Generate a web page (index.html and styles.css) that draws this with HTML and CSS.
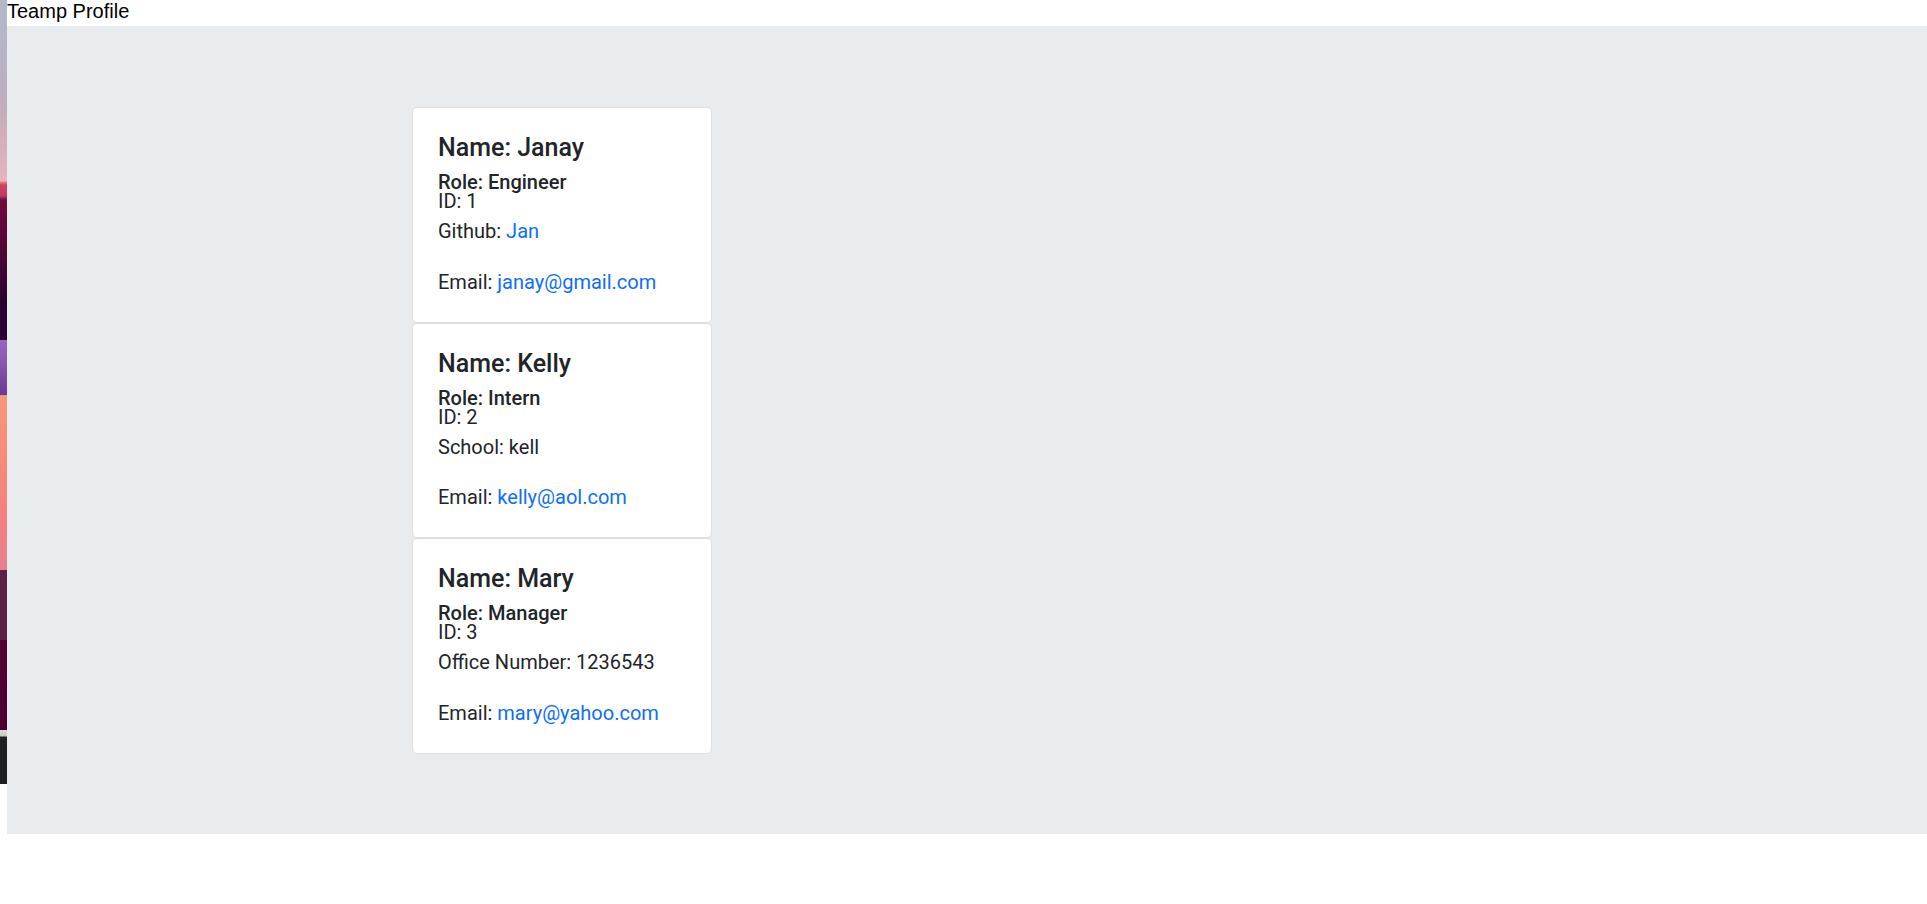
FILE: index.html
```html
<!DOCTYPE html>
<html lang="en">
<head>
<meta charset="utf-8">
<title>Teamp Profile</title>
<link rel="stylesheet" href="styles.css">
</head>
<body>
<div class="screen">
  <div class="wallpaper"></div>
  <div class="page">
    <div class="site-title">Teamp Profile</div>
    <main class="jumbotron">
      <div class="team-list">
        <section class="card">
          <h5 class="card-title">Name: Janay</h5>
          <h6 class="card-subtitle">Role: Engineer</h6>
          <p class="card-id">ID: 1</p>
          <p class="card-text">Github: <a href="#">Jan</a></p>
          <p class="card-email">Email: <a href="#">janay@gmail.com</a></p>
        </section>
        <section class="card">
          <h5 class="card-title">Name: Kelly</h5>
          <h6 class="card-subtitle">Role: Intern</h6>
          <p class="card-id">ID: 2</p>
          <p class="card-text">School: kell</p>
          <p class="card-email">Email: <a href="#">kelly@aol.com</a></p>
        </section>
        <section class="card">
          <h5 class="card-title">Name: Mary</h5>
          <h6 class="card-subtitle">Role: Manager</h6>
          <p class="card-id">ID: 3</p>
          <p class="card-text">Office Number: 1236543</p>
          <p class="card-email">Email: <a href="#">mary@yahoo.com</a></p>
        </section>
      </div>
    </main>
  </div>
</div>
</body>
</html>
```

FILE: styles.css
```css
* { box-sizing: border-box; }

html, body {
  margin: 0;
  padding: 0;
  background: #ffffff;
}

.screen {
  display: flex;
  align-items: flex-start;
  width: 1927px;
  height: 904px;
  overflow: hidden;
}

.wallpaper {
  flex: 0 0 7px;
  height: 784px;
  background: linear-gradient(to bottom,
    #b2b8c8 0px,
    #b6b4c6 60px,
    #c4acbc 110px,
    #dcb2bc 160px,
    #e6b6bc 181px,
    #f08070 182px,
    #cc4466 185px,
    #c03860 196px,
    #700840 200px,
    #5a0538 240px,
    #3c0434 275px,
    #2a0030 300px,
    #2a0032 340px,
    #9a66c0 340px,
    #8a5ab0 360px,
    #6c3a90 395px,
    #f8967a 395px,
    #f88c78 450px,
    #f28080 520px,
    #e6808e 570px,
    #5c1e44 570px,
    #5e2048 640px,
    #520032 640px,
    #4c0030 730px,
    #d8d8d8 730px,
    #c8c8c8 736px,
    #1e2124 737px,
    #1e2124 784px);
}

.page {
  flex: 1 1 auto;
  display: flex;
  flex-direction: column;
}

.site-title {
  font-family: "Liberation Sans", Arial, sans-serif;
  font-size: 20px;
  line-height: 23px;
  padding-bottom: 3px;
  color: #000000;
}

.jumbotron {
  height: 808px;
  background: #e9ecef;
  padding: 81px 0 0 405px;
}

.team-list {
  display: flex;
  flex-direction: column;
  width: 300px;
}

.card {
  background: #ffffff;
  border: 1px solid rgba(0, 0, 0, 0.125);
  border-radius: 5px;
  padding: 25px;
  font-family: Roboto, "Noto Sans", sans-serif;
  color: #212529;
}

.card-title {
  margin: 0 0 10px;
  font-size: 25px;
  line-height: 30px;
  font-weight: 500;
}

.card-subtitle {
  margin: 0;
  font-size: 20px;
  line-height: 19px;
  font-weight: 500;
}

.card-id {
  margin: 0;
  font-size: 20px;
  line-height: 19px;
}

.card-text {
  margin: 5px 0 0;
  font-size: 20px;
  line-height: 30px;
}

.card-email {
  margin: 20.7px 0 0;
  font-size: 20px;
  line-height: 30px;
}

.card a {
  color: #0d6efd;
  text-decoration: none;
}
```
